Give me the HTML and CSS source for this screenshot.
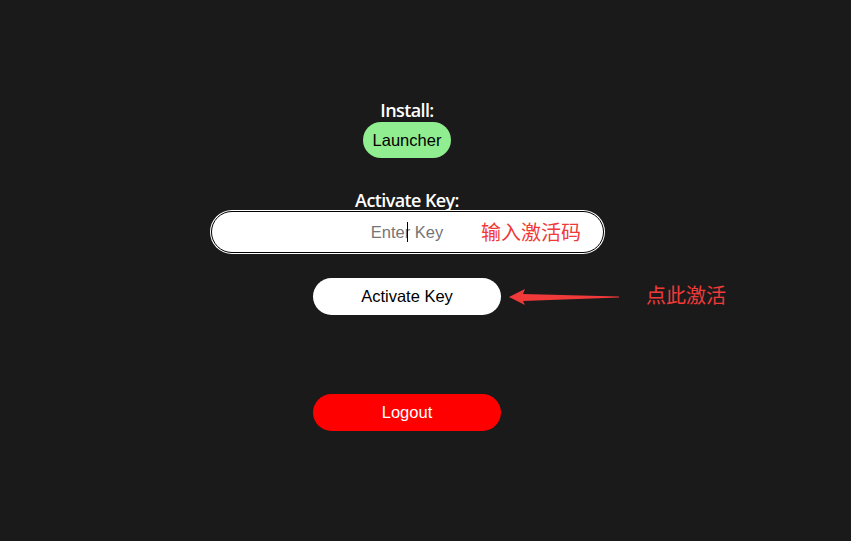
FILE: index.html
```html
<!DOCTYPE html>
<html lang="zh">
<head>
<meta charset="utf-8">
<title>Activate</title>
<link rel="stylesheet" href="styles.css">
</head>
<body>
<main class="page">
  <div class="label label-install">Install:</div>
  <button class="btn btn-launcher">Launcher</button>
  <div class="label label-key">Activate Key:</div>
  <div class="input-wrap">
    <input class="key-input" type="text" placeholder="Enter Key">
    <span class="caret"></span>
  </div>
  <button class="btn btn-activate">Activate Key</button>
  <button class="btn btn-logout">Logout</button>
</main>
<div class="note note-input">输入激活码</div>
<div class="note note-click">点此激活</div>
<svg class="arrow" width="120" height="24" viewBox="0 0 120 24">
  <path d="M0 9 L16 1 L14 6 L110 8.6 L110 9.6 L14 13 L16 17 Z" fill="#f03a3a"/>
</svg>
</body>
</html>
```
FILE: styles.css
```css
html, body {
  margin: 0;
  padding: 0;
  background: #1a1a1a;
  height: 100%;
}
body {
  position: relative;
  font-family: "Liberation Sans", Arial, sans-serif;
}
.page {
  width: 814px;
  display: flex;
  flex-direction: column;
  align-items: center;
  padding-top: 99px;
}
.label {
  color: #ffffff;
  font-family: "Open Sans", "Noto Sans", sans-serif;
  font-size: 18px;
  font-weight: 600;
  line-height: 22px;
  letter-spacing: -0.6px;
}
.label-key {
  margin-top: 32px;
  line-height: 20px;
}
.btn {
  border: none;
  font-family: "Liberation Sans", Arial, sans-serif;
  font-size: 16.5px;
  padding: 0;
  cursor: pointer;
}
.btn-launcher {
  margin-top: 1px;
  width: 88px;
  height: 36px;
  border-radius: 18px;
  background: #90ee90;
  color: #000;
}
.input-wrap {
  position: relative;
  margin-top: 1px;
}
.key-input {
  box-sizing: border-box;
  width: 393px;
  height: 42px;
  border: 1px solid #000;
  border-radius: 21px;
  background: #fff;
  box-shadow: 0 0 0 1px #fff;
  outline: none;
  text-align: center;
  font-family: "Liberation Sans", Arial, sans-serif;
  font-size: 16.5px;
  color: #000;
  display: block;
}
.key-input::placeholder {
  color: #757575;
}
.caret {
  position: absolute;
  left: 196px;
  top: 11px;
  width: 1px;
  height: 20px;
  background: #000;
}
.btn-activate {
  margin-top: 25px;
  width: 188px;
  height: 37px;
  border-radius: 18.5px;
  background: #fff;
  color: #000;
}
.btn-logout {
  margin-top: 79px;
  width: 188px;
  height: 37px;
  border-radius: 18.5px;
  background: #ff0000;
  color: #fff;
}
.note {
  position: absolute;
  color: #f03a3a;
  font-family: "Noto Sans CJK SC", sans-serif;
  font-size: 20px;
  line-height: 24px;
}
.note-input {
  left: 481px;
  top: 220px;
}
.note-click {
  left: 646px;
  top: 283px;
}
.arrow {
  position: absolute;
  left: 509px;
  top: 288px;
}
```
